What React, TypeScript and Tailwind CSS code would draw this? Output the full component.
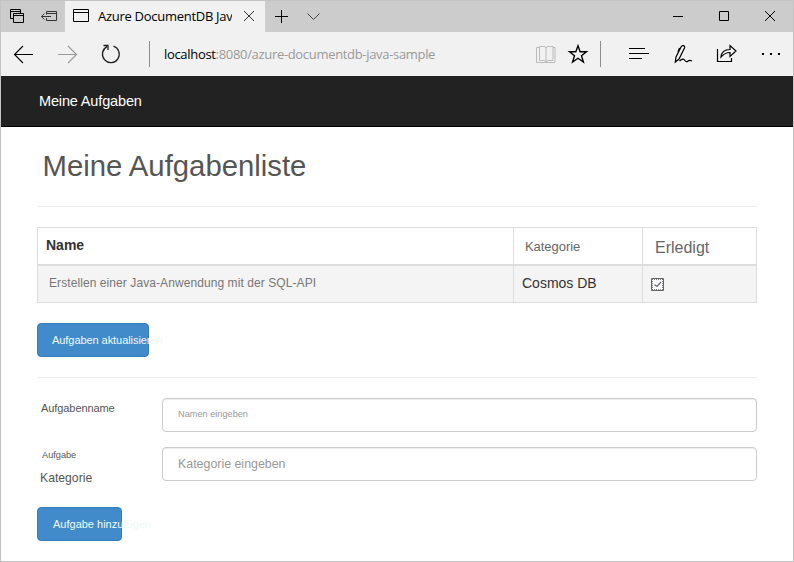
import React from "react";

type IconProps = { x: number; y?: number; w: number; h: number; label: string; className?: string; children: React.ReactNode };

function Icon({ x, y = 1, w, h, label, className = "", children }: IconProps) {
  return (
    <svg aria-label={label} width={w} height={h} viewBox={`${x} ${y} ${w} ${h}`} fill="none" stroke="currentColor" strokeWidth="1" className={`shrink-0 ${className}`}>
      {children}
    </svg>
  );
}

function TabBar() {
  return (
    <div className="flex h-[31px] bg-[#ccc] text-black">
      <Icon x={1} w={32} h={31} label="Tabs">
        <path d="M13 18.500h-2.500v-9h10v3.500M10 11.500h11M13.500 22.500v-9h10v9zM13 15.500h11" />
      </Icon>
      <Icon x={33} w={32} h={31} label="Set tabs aside" className="text-[#333]">
        <path d="M46.500 14.500v-3h10v9h-10v-2.500M46 13.500h11M41.500 16.500H51M44.500 13.500l-3 3 3 3" />
      </Icon>
      <div className="flex w-[200px] bg-[#f1f1f1]">
        <Icon x={65} w={32} h={31} label="Page">
          <path d="M73.500 9.500h15v12h-15zM73 12.500h16" />
        </Icon>
        <div className="ml-px w-[134px] shrink-0 overflow-hidden whitespace-nowrap font-['Open_Sans',sans-serif] text-[13px] leading-[31px] tracking-[-0.28px]">
          Azure DocumentDB Java
        </div>
        <Icon x={232} w={33} h={31} label="Close tab" className="text-[#333]">
          <path d="M244 11l10 10M254 11l-10 10" />
        </Icon>
      </div>
      <Icon x={265} w={33} h={31} label="New tab">
        <path d="M275 16.500h13M281.500 10v13" />
      </Icon>
      <Icon x={298} w={32} h={31} label="Tab previews" className="text-[#444]">
        <path d="M307.500 13.500l6 6 6-6" />
      </Icon>
      <div className="flex-1" />
      <Icon x={655} w={46} h={31} label="Minimize">
        <path d="M673 16.500h10" />
      </Icon>
      <Icon x={701} w={46} h={31} label="Maximize">
        <path d="M719.500 11.500h9v9h-9z" />
      </Icon>
      <Icon x={747} w={46} h={31} label="Close">
        <path d="M765 11l10 10M775 11l-10 10" />
      </Icon>
    </div>
  );
}

function AddressBar() {
  return (
    <div className="flex h-11 items-center bg-[#f1f1f1] text-black">
      <Icon x={1} y={32} w={44} h={44} label="Back">
        <path strokeWidth="1.100" d="M14.500 54.500H33M23 46l-8.500 8.500L23 63" />
      </Icon>
      <Icon x={45} y={32} w={44} h={44} label="Forward" className="text-[#999]">
        <path strokeWidth="1.100" d="M58 54.500h18.500M68 46l8.500 8.500L68 63" />
      </Icon>
      <Icon x={89} y={32} w={44} h={44} label="Refresh" className="text-[#222]">
        <path strokeWidth="1.300" d="M113.500 46.200a8.400 8.400 0 1 1-6.500.500M103.500 45.500h4.500v4.500" />
      </Icon>
      <div className="ml-4 h-[26px] w-px bg-[#8c8c8c]" />
      <div className="ml-[14px] flex-1 whitespace-nowrap font-['Open_Sans',sans-serif] text-[13px] leading-[44px] tracking-[-0.32px] text-[#999]">
        <span className="text-black">localhost</span>:8080/azure-documentdb-java-sample
      </div>
      <Icon x={530} y={32} w={32} h={44} label="Reading view" className="text-[#bbb]">
        <path d="M539 47.500h-2.500v15h18.500v-15h-2M539.500 46.500h4.500l2 1 2-1h5v14h-5l-2 1-2-1h-4.500zM546 47v15" />
      </Icon>
      <Icon x={562} y={32} w={32} h={44} label="Favorites">
        <path strokeWidth="1.400" d="M578 45.800l2.200 6h6.300l-5 4 1.900 6.300-5.400-3.800-5.400 3.800 1.900-6.300-5-4h6.300z" />
      </Icon>
      <div className="ml-1.5 h-[26px] w-px bg-[#8c8c8c]" />
      <Icon x={616} y={32} w={44} h={44} label="Hub" className="ml-[15px]">
        <path d="M629 48.500h16M629 53.500h20M629 58.500h13" />
      </Icon>
      <Icon x={660} y={32} w={44} h={44} label="Web note">
        <path strokeWidth="1.200" d="M675.300 62l.700-5 5-10c1.200-2.500 4.500-1.500 3.500 1l-5.500 11zM679.500 48l-1.500 4M679.500 61c3-3 4.500-2 5.500-.500s2 1.500 3 .500 2-1 4 0" />
      </Icon>
      <Icon x={704} y={32} w={44} h={44} label="Share">
        <path strokeWidth="1.200" d="M717.500 49v12.500h14V58M721 57c.500-5 4-7.500 9-7.500v-4l6 5.500-6 5.500v-4c-4 0-6 1-9 4.500z" />
      </Icon>
      <Icon x={748} y={32} w={45} h={44} label="More">
        <path fill="currentColor" stroke="none" d="M762 53h2v2h-2zM770 53h2v2h-2zM778 53h2v2h-2z" />
      </Icon>
    </div>
  );
}

function TaskTable() {
  return (
    <div className="mt-5 grid h-[76px] grid-cols-[476px_129px_114px] grid-rows-[37px_39px] border-r border-[#ddd] text-[#333]">
      <div className="border-l border-t border-[#ddd] pl-2 pt-[9px] text-[14px] font-bold leading-4">Name</div>
      <div className="border-l border-t border-[#ddd] pl-[11px] pt-[11px] text-[13px] leading-4 tracking-[-0.05px] text-[#666]">Kategorie</div>
      <div className="border-l border-t border-[#ddd] pl-3 pt-[10px] text-[16px] leading-5 text-[#666]">Erledigt</div>
      <div className="border-b border-l border-t-2 border-[#ddd] bg-[#f4f4f4] pl-[11px] pt-[9px] text-[12px] leading-4 tracking-[0.08px] text-[#777]">
        Erstellen einer Java-Anwendung mit der SQL-API
      </div>
      <div className="border-b border-l border-t-2 border-[#ddd] bg-[#f4f4f4] pl-2 pt-[9px] text-[14px] leading-4">Cosmos DB</div>
      <div className="border-b border-l border-t-2 border-[#ddd] bg-[#f4f4f4] pl-2 pt-3">
        <Icon x={0} y={0} w={13} h={13} label="Erledigt">
          <path fill="#fff" stroke="#666" d="M.5.500h12v12H.5z" />
          <path stroke="#777" strokeDasharray="1 1" d="M1 1.500h11M1 11.500h11M1.500 1v11M11.500 1v11" />
          <path stroke="#667" strokeWidth="1.200" d="M3.500 6.500L6 8.500 10 4" />
        </Icon>
      </div>
    </div>
  );
}

const buttonStyle = "h-[34px] rounded border border-[#357ebd] bg-[#428bca] text-left text-[11px] leading-4 whitespace-nowrap text-[#eefaf7]";
const inputStyle = "block h-[34px] w-[595px] rounded border border-[#ccc] bg-white pl-[15px] shadow-[inset_0_1px_1px_rgba(0,0,0,0.075)] placeholder:text-[#999]";

export default function App() {
  return (
    <div className="h-[562px] w-[794px] overflow-hidden border border-[#c3c3c3] bg-white font-['Liberation_Sans',Arial,sans-serif]">
      <TabBar />
      <AddressBar />
      <nav className="h-[51px] border-b border-black bg-[#222] pl-[38px] pt-[15px] text-[14.500px] leading-5 tracking-[-0.15px] text-white">Meine Aufgaben</nav>
      <main className="ml-9 w-[720px]">
        <h1 className="pl-[5.500px] pt-[19px] text-[29.300px] leading-10 text-[#555]">Meine Aufgabenliste</h1>
        <div className="mt-5 h-px bg-[#eee]" />
        <TaskTable />
        <button className={`${buttonStyle} mt-5 block w-28 pl-[14px] tracking-[-0.060px]`}>Aufgaben aktualisieren</button>
        <div className="mt-5 h-px bg-[#eee]" />
        <form className="pt-5">
          <div className="flex h-[49px]">
            <label className="w-[125px] pl-[4px] pt-[2px] text-[11px] leading-4 tracking-[-0.080px] text-[#555]">Aufgabenname</label>
            <input className={`${inputStyle} pb-0.5 text-[9.200px]`} placeholder="Namen eingeben" />
          </div>
          <div className="flex h-[60px]">
            <label className="w-[125px] leading-4 text-[#555]">
              <span className="block pl-[5px] text-[9.200px]">Aufgabe</span>
              <span className="block pl-[3px] pt-[7px] text-[12.200px]">Kategorie</span>
            </label>
            <input className={`${inputStyle} text-[12.400px]`} placeholder="Kategorie eingeben" />
          </div>
          <button type="button" className={`${buttonStyle} block w-[85px] pl-[15px]`}>Aufgabe hinzufügen</button>
        </form>
      </main>
    </div>
  );
}
